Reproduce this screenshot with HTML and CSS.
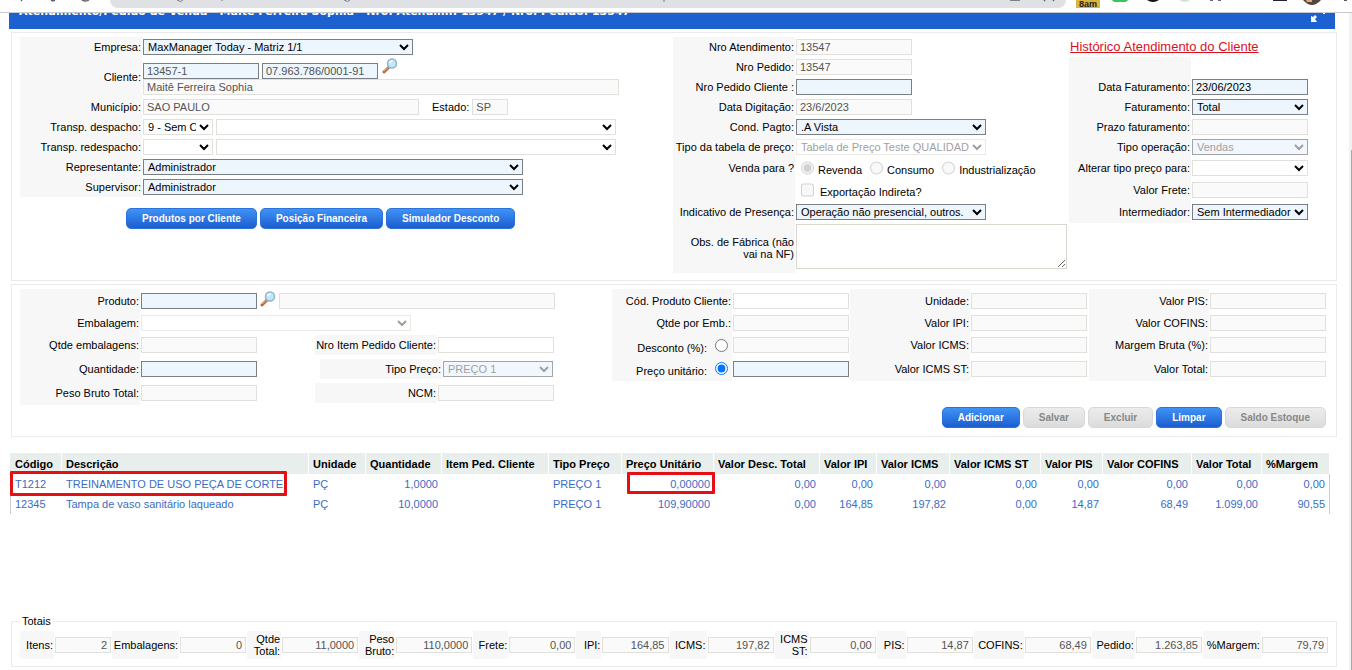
FILE: index.html
```html
<!DOCTYPE html>
<html lang="pt-BR">
<head>
<meta charset="utf-8">
<title>Atendimento/Pedido de Venda</title>
<link rel="stylesheet" href="styles.css">
</head>
<body>
<header class="browser">
  <svg class="nav-marks" width="100" height="9" viewBox="0 0 100 9" fill="none" stroke="#5f6368" stroke-width="1.5"><path d="M21 0l1 1M51 0l2 1 2-1M82 0q4 2 7 0"/></svg>
  <div class="address">
    <svg width="560" height="8" viewBox="0 0 560 8" fill="none" stroke="#777b80" stroke-width="1"><path d="M67 0q4 3 6 0M112 0v1M234 0q4 3 6 0M554 0v2"/></svg>
    <svg width="60" height="8" viewBox="0 0 60 8" fill="none" stroke="#5f6368" stroke-width="1.5"><path d="M4 0h10M38 0l1 1M47 0l1 1"/></svg>
  </div>
  <span class="badge">8am</span>
  <svg class="extensions" width="240" height="10" viewBox="0 0 240 10"><path fill="#34c759" d="M0 0h16q-1 2-3 2H3Q1 2 0 0z"/><path fill="#111" d="M35 0h12q-6 4-12 0z"/><path fill="#cfe6d2" d="M67 0h11q-5 4-11 0z"/><path fill="#667" d="M98 0h3v1h-3zM106 0h3v1h-3z"/><path fill="#223" d="M161 0h14v1h-14z"/><path fill="#55443c" d="M191 0h18q-9 10-18 0z"/><path fill="#dda88c" d="M194 0h6v2h-5z"/><path fill="#555" d="M232 0h3v1h-3z"/></svg>
</header>
<div class="viewport">
<main class="page">
  <h1 class="titlebar"><span>Atendimento/Pedido de Venda - Maitê Ferreira Sophia - Nro. Atendim.: 13547 / Nro. Pedido: 13547</span>
    <svg width="16" height="14" viewBox="0 0 16 14" fill="#fff"><path d="M1 3l2 1 2-2 2 2-2 2 2 3H1zM9 0h6v1h-2V0z"/></svg>
  </h1>

  <section class="panel order">
    <div class="column">
      <div class="row"><label for="empresa">Empresa:</label><div class="fields"><select id="empresa" class="w270"><option>MaxManager Today - Matriz 1/1</option></select></div></div>
      <div class="row double"><label for="cliente">Cliente:</label>
        <div class="stack">
          <div class="fields"><input id="cliente" class="muted" value="13457-1"><input class="muted" aria-label="CNPJ" value="07.963.786/0001-91">
            <button class="lens" aria-label="Buscar cliente"><svg width="16" height="16" viewBox="0 0 16 16"><path d="M7 9L2 14" stroke="#b96c3d" stroke-width="3" stroke-linecap="round"/><path d="M6.500 9L2 13" stroke="#e8b08c" stroke-width="1"/><circle cx="10" cy="5.500" r="4.500" fill="#c4e6fb" stroke="#91b4cf" stroke-width="1.500"/><path d="M7.500 5a3 3 0 013-2" stroke="#fff" stroke-width="1.500" fill="none"/></svg></button></div>
          <div class="fields"><input class="locked w476" aria-label="Nome do cliente" readonly value="Maitê Ferreira Sophia"></div>
        </div></div>
      <div class="row"><label for="municipio">Município:</label><div class="fields"><input id="municipio" class="locked w276" readonly value="SAO PAULO"><label class="plain" for="estado">Estado:</label><input id="estado" class="locked w36" readonly value="SP"></div></div>
      <div class="row"><label for="despacho">Transp. despacho:</label><div class="fields"><select id="despacho" class="white w70"><option>9 - Sem Ocorrência</option></select><select class="white w400" aria-label="Transportadora despacho"><option></option></select></div></div>
      <div class="row"><label for="redespacho">Transp. redespacho:</label><div class="fields"><select id="redespacho" class="white w70"><option></option></select><select class="white w400" aria-label="Transportadora redespacho"><option></option></select></div></div>
      <div class="row"><label for="rep">Representante:</label><div class="fields"><select id="rep" class="w380"><option>Administrador</option></select></div></div>
      <div class="row"><label for="sup">Supervisor:</label><div class="fields"><select id="sup" class="w380"><option>Administrador</option></select></div></div>
      <div class="actions"><button class="button">Produtos por Cliente</button><button class="button">Posição Financeira</button><button class="button">Simulador Desconto</button></div>
    </div>

    <div class="column">
      <div class="row"><label for="atend">Nro Atendimento:</label><div class="fields"><input id="atend" class="locked" readonly value="13547"></div></div>
      <div class="row"><label for="pedido">Nro Pedido:</label><div class="fields"><input id="pedido" class="locked" readonly value="13547"></div></div>
      <div class="row"><label for="pedcli">Nro Pedido Cliente :</label><div class="fields"><input id="pedcli"></div></div>
      <div class="row"><label for="digit">Data Digitação:</label><div class="fields"><input id="digit" class="locked" readonly value="23/6/2023"></div></div>
      <div class="row"><label for="pagto">Cond. Pagto:</label><div class="fields"><select id="pagto" class="w190"><option>.A Vista</option></select></div></div>
      <div class="row"><label for="tabela">Tipo da tabela de preço:</label><div class="fields"><select id="tabela" class="white w190" disabled><option>Tabela de Preço Teste QUALIDADE</option></select></div></div>
      <div class="row tall"><span class="caption">Venda para ?</span><div class="fields choices"><label><input type="radio" name="venda" checked disabled><span>Revenda</span></label><label><input type="radio" name="venda" disabled><span>Consumo</span></label><label><input type="radio" name="venda" disabled><span>Industrialização</span></label></div></div>
      <div class="row tall"><span class="caption"></span><div class="fields choices"><label class="check"><input type="checkbox" disabled><span>Exportação Indireta?</span></label></div></div>
      <div class="row tall"><label for="presenca">Indicativo de Presença:</label><div class="fields"><select id="presenca" class="w190"><option>Operação não presencial, outros.</option></select></div></div>
      <div class="row notes"><label for="obs">Obs. de Fábrica (não vai na NF)</label><div class="fields"><textarea id="obs"></textarea></div></div>
    </div>

    <div class="column">
      <div class="history"><a href="#historico">Histórico Atendimento do Cliente</a></div>
      <div class="row"><span class="caption"></span></div>
      <div class="row"><label for="datafat">Data Faturamento:</label><div class="fields"><input id="datafat" value="23/06/2023"></div></div>
      <div class="row"><label for="fat">Faturamento:</label><div class="fields"><select id="fat"><option>Total</option></select></div></div>
      <div class="row"><label for="prazo">Prazo faturamento:</label><div class="fields"><input id="prazo" class="locked" readonly></div></div>
      <div class="row"><label for="oper">Tipo operação:</label><div class="fields"><select id="oper" disabled><option>Vendas</option></select></div></div>
      <div class="row tall"><label for="alterar">Alterar tipo preço para:</label><div class="fields"><select id="alterar" class="white"><option></option></select></div></div>
      <div class="row tall"><label for="frete">Valor Frete:</label><div class="fields"><input id="frete" class="locked" readonly></div></div>
      <div class="row tall"><label for="interm">Intermediador:</label><div class="fields"><select id="interm"><option>Sem Intermediador</option></select></div></div>
    </div>
  </section>

  <section class="panel product">
    <div class="product-grid">
      <div class="column">
        <div class="row"><label for="produto">Produto:</label><div class="fields search"><input id="produto"><button class="lens" aria-label="Buscar produto"><svg width="16" height="16" viewBox="0 0 16 16"><path d="M7 9L2 14" stroke="#b96c3d" stroke-width="3" stroke-linecap="round"/><path d="M6.500 9L2 13" stroke="#e8b08c" stroke-width="1"/><circle cx="10" cy="5.500" r="4.500" fill="#c4e6fb" stroke="#91b4cf" stroke-width="1.500"/><path d="M7.500 5a3 3 0 013-2" stroke="#fff" stroke-width="1.500" fill="none"/></svg></button><input class="locked w276" aria-label="Descrição do produto" readonly></div></div>
        <div class="row"><label for="emb">Embalagem:</label><div class="fields"><select id="emb" class="white w270" disabled><option></option></select></div></div>
        <div class="row"><label for="qtdemb">Qtde embalagens:</label><div class="fields"><input id="qtdemb" class="locked" readonly><label class="sub" for="item">Nro Item Pedido Cliente:</label><input id="item" class="white"></div></div>
        <div class="row"><label for="qtd">Quantidade:</label><div class="fields"><input id="qtd"><label class="sub far" for="tpreco">Tipo Preço:</label><select id="tpreco" class="w110" disabled><option>PREÇO 1</option></select></div></div>
        <div class="row"><label for="peso">Peso Bruto Total:</label><div class="fields"><input id="peso" class="locked" readonly><label class="sub" for="ncm">NCM:</label><input id="ncm" class="locked" readonly></div></div>
      </div>
      <div class="column">
        <div class="row"><label for="codcli">Cód. Produto Cliente:</label><div class="fields"><input id="codcli" class="white"></div></div>
        <div class="row"><label for="qtdpor">Qtde por Emb.:</label><div class="fields"><input id="qtdpor" class="locked" readonly></div></div>
        <div class="row"><label class="with-radio"><span>Desconto (%):</span><input type="radio" name="modo"></label><div class="fields"><input class="locked" aria-label="Valor do desconto" readonly></div></div>
        <div class="row"><label class="with-radio"><span>Preço unitário:</span><input type="radio" name="modo" checked></label><div class="fields"><input aria-label="Valor do preço unitário"></div></div>
      </div>
      <div class="column">
        <div class="row"><label for="unid">Unidade:</label><div class="fields"><input id="unid" class="locked" readonly></div></div>
        <div class="row"><label for="vipi">Valor IPI:</label><div class="fields"><input id="vipi" class="locked" readonly></div></div>
        <div class="row"><label for="vicms">Valor ICMS:</label><div class="fields"><input id="vicms" class="locked" readonly></div></div>
        <div class="row"><label for="vst">Valor ICMS ST:</label><div class="fields"><input id="vst" class="locked" readonly></div></div>
      </div>
      <div class="column">
        <div class="row"><label for="vpis">Valor PIS:</label><div class="fields"><input id="vpis" class="locked" readonly></div></div>
        <div class="row"><label for="vcof">Valor COFINS:</label><div class="fields"><input id="vcof" class="locked" readonly></div></div>
        <div class="row"><label for="margem">Margem Bruta (%):</label><div class="fields"><input id="margem" class="locked" readonly></div></div>
        <div class="row"><label for="vtotal">Valor Total:</label><div class="fields"><input id="vtotal" class="locked" readonly></div></div>
      </div>
    </div>
    <div class="actions end"><button class="button">Adicionar</button><button class="button" disabled>Salvar</button><button class="button" disabled>Excluir</button><button class="button">Limpar</button><button class="button" disabled>Saldo Estoque</button></div>
  </section>

  <div class="items">
    <table>
      <colgroup><col class="c52"><col><col class="c57"><col class="c76"><col class="c107"><col class="c73"><col class="c92"><col class="c106"><col class="c57"><col class="c73"><col class="c91"><col class="c62"><col class="c89"><col class="c70"><col class="c68"></colgroup>
      <thead><tr><th>Código</th><th>Descrição</th><th>Unidade</th><th>Quantidade</th><th>Item Ped. Cliente</th><th>Tipo Preço</th><th>Preço Unitário</th><th>Valor Desc. Total</th><th>Valor IPI</th><th>Valor ICMS</th><th>Valor ICMS ST</th><th>Valor PIS</th><th>Valor COFINS</th><th>Valor Total</th><th>%Margem</th></tr></thead>
      <tbody>
        <tr><td class="marked mark-product">T1212</td><td>TREINAMENTO DE USO PEÇA DE CORTE</td><td>PÇ</td><td class="num">1,0000</td><td></td><td>PREÇO 1</td><td class="num marked mark-price">0,00000</td><td class="num">0,00</td><td class="num">0,00</td><td class="num">0,00</td><td class="num">0,00</td><td class="num">0,00</td><td class="num">0,00</td><td class="num">0,00</td><td class="num">0,00</td></tr>
        <tr><td>12345</td><td>Tampa de vaso sanitário laqueado</td><td>PÇ</td><td class="num">10,0000</td><td></td><td>PREÇO 1</td><td class="num">109,90000</td><td class="num">0,00</td><td class="num">164,85</td><td class="num">197,82</td><td class="num">0,00</td><td class="num">14,87</td><td class="num">68,49</td><td class="num">1.099,00</td><td class="num">90,55</td></tr>
      </tbody>
    </table>
  </div>

  <fieldset class="totals">
    <legend>Totais</legend>
    <div class="totals-grid">
      <label for="t1">Itens:</label><input id="t1" class="locked" readonly value="2">
      <label for="t2">Embalagens:</label><input id="t2" class="locked" readonly value="0">
      <label for="t3">Qtde Total:</label><input id="t3" class="locked" readonly value="11,0000">
      <label for="t4">Peso Bruto:</label><input id="t4" class="locked" readonly value="110,0000">
      <label for="t5">Frete:</label><input id="t5" class="locked" readonly value="0,00">
      <label for="t6">IPI:</label><input id="t6" class="locked" readonly value="164,85">
      <label for="t7">ICMS:</label><input id="t7" class="locked" readonly value="197,82">
      <label for="t8">ICMS ST:</label><input id="t8" class="locked" readonly value="0,00">
      <label for="t9">PIS:</label><input id="t9" class="locked" readonly value="14,87">
      <label for="t10">COFINS:</label><input id="t10" class="locked" readonly value="68,49">
      <label for="t11">Pedido:</label><input id="t11" class="locked" readonly value="1.263,85">
      <label for="t12">%Margem:</label><input id="t12" class="locked" readonly value="79,79">
    </div>
  </fieldset>
</main>
<div class="rail"><div class="thumb"></div></div>
</div>
</body>
</html>
```
FILE: styles.css
```css
*, *::after { box-sizing: border-box; }
body {
  margin: 0;
  height: 100vh;
  display: flex;
  flex-direction: column;
  overflow: hidden;
  background: #fff;
  color: #000;
  font: 11px/12px "Liberation Sans", Arial, sans-serif;
}
input, select, textarea, button { font: inherit; margin: 0; }

/* browser toolbar */
.browser {
  flex: none;
  display: flex;
  align-items: flex-start;
  height: 13px;
  overflow: hidden;
  border-bottom: 1px solid #c5c8cd;
}
.nav-marks { flex: none; }
.address {
  flex: 1;
  display: flex;
  justify-content: space-between;
  height: 8px;
  margin: 0 10px;
  background: #dfe1e5;
  border-radius: 0 0 14px 14px;
  overflow: hidden;
}
.badge {
  width: 24px;
  height: 8px;
  background: #dcb63c;
  color: #222;
  font: bold 9px/8px "Liberation Sans", Arial, sans-serif;
  text-align: center;
}
.extensions { flex: none; margin-left: 12px; }

/* page and scroll rail */
.viewport { flex: 1; display: flex; min-height: 0; }
.page { flex: 1; min-width: 0; padding: 0 13px 0 9px; }
.rail { width: 3px; padding-top: 137px; background: #f1f1f1; }
.thumb { height: 100%; margin-left: 2px; background: #a8a8a8; }

.titlebar {
  display: flex;
  justify-content: space-between;
  align-items: flex-start;
  height: 16px;
  margin: 0 1px 3px 0;
  padding: 0 9px 0 10px;
  overflow: hidden;
  background: #1d60cf;
  color: #fff;
  font: bold 11px/14px "DejaVu Sans", Verdana, sans-serif;
}
.titlebar span { margin-top: -8px; white-space: nowrap; }

.panel {
  margin: 0 -1px 3px 2px;
  border: 1px solid #ebebeb;
}
.order {
  display: grid;
  grid-template-columns: 653fr 396fr 259fr;
  padding: 4px 8px 7px;
}
.row { display: flex; min-height: 20px; gap: 1px; }
.tall { min-height: 22px; }
.double { min-height: 40px; }
.notes { min-height: 50px; }
.notes .fields { align-items: flex-start; padding-top: 1px; }
.row > label, .caption {
  flex: none;
  display: flex;
  align-items: center;
  justify-content: flex-end;
  width: 122px;
  padding-right: 1px;
  background: #f7f7f7;
  text-align: right;
}
.notes > label { padding-left: 8px; }
.fields { display: flex; align-items: center; gap: 3px; }
.stack { display: flex; flex-direction: column; padding-top: 6px; }
.stack .fields { height: 16px; }
.plain { margin-left: 10px; }

input:not([type]), select {
  width: 116px;
  height: 16px;
  padding: 0 3px;
  border: 1px solid #7b7f84;
  border-radius: 0;
  background-color: #edf5fd;
  color: #000;
}
select { padding: 0; }
select:disabled { color: #777; }
input.muted { color: #545454; }
input.locked { border-color: #e2e0da; background: #fafafa; color: #545454; }
input.white, select.white { border-color: #e2e0da; background-color: #fff; }
textarea {
  width: 271px;
  height: 45px;
  border: 1px solid #d9d8cf;
  background: #fff;
}
.lens { width: 16px; height: 16px; padding: 0; border: 0; background: none; }
.lens svg { display: block; }
.stack .lens { align-self: flex-start; margin: -5px 0 0 1px; }
.search .lens { align-self: flex-start; margin-top: 2px; }
input.w36 { width: 36px; }
select.w70 { width: 70px; }
select.w110 { width: 110px; }
select.w190 { width: 190px; }
select.w270 { width: 270px; }
input.w276 { width: 276px; }
select.w380 { width: 380px; }
select.w400 { width: 400px; }
input.w476 { width: 476px; }

.choices { gap: 8px; padding-left: 5px; }
.choices label { display: flex; gap: 4px; }
.choices .check { gap: 6px; }
.choices span { padding-top: 4px; }
.history { height: 20px; padding: 2px 0 0 1px; }
.history a { color: #d8121c; font-size: 13px; line-height: 16px; white-space: nowrap; }

/* buttons */
.actions { display: flex; gap: 3px; padding: 11px 0 0 106px; }
.end { justify-content: flex-end; padding: 2px 2px 0 0; }
.button {
  height: 21px;
  padding: 0 15px;
  border: 1px solid #2c72dc;
  border-radius: 5px;
  background: linear-gradient(#3f93f6, #1b5dcf);
  color: #fff;
  font-size: 10px;
  font-weight: bold;
}
.button:disabled {
  border-color: #d8d8d8;
  background: linear-gradient(#ececec, #dcdcdc);
  color: #888;
}

/* product entry */
.product { padding: 4px 8px 8px; }
.product-grid { display: grid; grid-template-columns: 592fr 238fr 239fr 239fr; }
.product .row { min-height: 22px; }
.product .row:first-child { min-height: 23px; }
.product .row:nth-child(4) { min-height: 25px; }
.product .row:nth-child(5) { min-height: 24px; }
.product .row > label { width: 120px; }
.sub {
  display: flex;
  align-items: center;
  justify-content: flex-end;
  width: 122px;
  height: 20px;
  margin: 0 -2px 0 55px;
  padding-right: 1px;
  background: #f7f7f7;
}
.far { margin-left: 60px; }
.product .with-radio { gap: 8px; padding-right: 4px; }
.with-radio span { padding-top: 5px; }

/* order items */
.items { min-height: 162px; margin: 16px 6px 0 1px; }
.items table { width: 100%; table-layout: fixed; border-collapse: separate; border-spacing: 0; white-space: nowrap; }
.items th {
  height: 21px;
  padding: 0 4px;
  background: #e7eeec;
  border-right: 1px solid #fff;
  text-align: left;
}
.items th:first-child { padding-left: 5px; }
.items td { height: 20px; padding: 0 4px; color: #3b6cc4; border: 0 solid #ccc; }
.items td:first-child { border-left-width: 1px; }
.items td:last-child { border-right-width: 1px; }
.items .num { text-align: right; }
.marked { position: relative; }
.marked::after {
  content: "";
  position: absolute;
  border: 3px solid #e60f14;
  border-radius: 1px;
}
.mark-product::after { left: -1px; top: -3px; width: 277px; height: 25px; }
.mark-price::after { right: -1px; top: -2px; width: 88px; height: 22px; }
.c52 { width: 52px; } .c57 { width: 57px; } .c62 { width: 62px; } .c68 { width: 68px; }
.c70 { width: 70px; } .c73 { width: 73px; } .c76 { width: 76px; } .c89 { width: 89px; }
.c91 { width: 91px; } .c92 { width: 92px; } .c106 { width: 106px; } .c107 { width: 107px; }

/* totals */
.totals { min-width: 0; margin: 0 -1px 0 2px; padding: 4px 8px 7px; border: 1px solid #ebebeb; }
.totals legend { padding: 0 2px; }
.totals-grid {
  display: grid;
  grid-template-columns: 34px 56fr 67px 66fr 34px 76fr 36px 76fr 35px 66fr 25px 66fr 37px 66fr 34px 66fr 29px 66fr 50px 66fr 43px 66fr 58px 66fr;
  gap: 1px;
  align-items: center;
  min-height: 28px;
}
.totals label { display: flex; align-items: center; justify-content: flex-end; height: 28px; padding-right: 1px; background: #f7f7f7; text-align: right; }
.totals .locked { width: 100%; min-width: 0; text-align: right; }
```
